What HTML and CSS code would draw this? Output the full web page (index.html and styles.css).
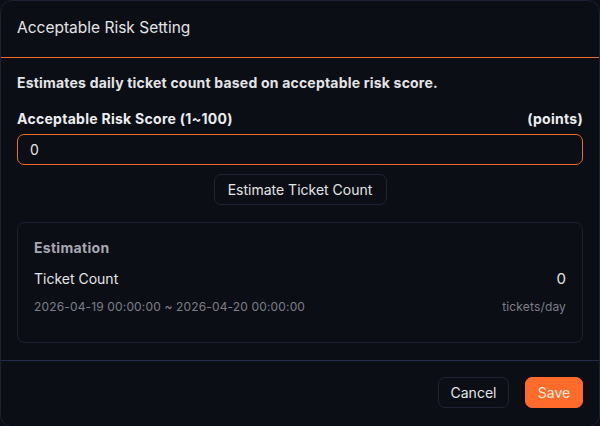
FILE: index.html
```html
<!DOCTYPE html>
<html>
<head>
<meta charset="utf-8">
<link rel="stylesheet" href="styles.css">
</head>
<body>
<div class="dialog">
  <div class="header">Acceptable Risk Setting</div>
  <div class="body">
    <p class="desc">Estimates daily ticket count based on acceptable risk score.</p>
    <div class="label-row">
      <span>Acceptable Risk Score (1~100)</span>
      <span>(points)</span>
    </div>
    <div class="input">0</div>
    <div class="center">
      <button class="btn">Estimate Ticket Count</button>
    </div>
    <div class="card">
      <div class="card-title">Estimation</div>
      <div class="row main-row">
        <span>Ticket Count</span>
        <span class="value">0</span>
      </div>
      <div class="row sub-row">
        <span>2026-04-19 00:00:00 ~ 2026-04-20 00:00:00</span>
        <span>tickets/day</span>
      </div>
    </div>
  </div>
  <div class="footer">
    <button class="btn cancel">Cancel</button>
    <button class="btn save">Save</button>
  </div>
</div>
</body>
</html>
```

FILE: styles.css
```css
html, body {
  margin: 0;
  padding: 0;
  background: #0b0e15;
  width: 600px;
  height: 426px;
  overflow: hidden;
}
body {
  font-family: Inter, "Noto Sans", sans-serif;
  color: #e4e4e7;
}
.dialog {
  box-sizing: border-box;
  width: 600px;
  height: 427px;
  background: #0b0e15;
  border: 1px solid #1c2133;
  border-radius: 12px;
  display: flex;
  flex-direction: column;
}
.header {
  font-size: 15.5px;
  line-height: 22px;
  padding: 16px 16px 18px 16px;
  border-bottom: 1px solid #f26a2a;
  color: #e4e4e7;
}
.body {
  padding: 15px 16px 17px 16px;
  border-bottom: 1px solid #232a4d;
}
.desc {
  margin: 0;
  font-size: 14px;
  font-weight: 700;
  line-height: 20px;
  letter-spacing: 0.2px;
  color: #e4e4e7;
}
.label-row {
  margin-top: 16px;
  display: flex;
  justify-content: space-between;
  font-size: 14px;
  font-weight: 700;
  line-height: 20px;
  letter-spacing: 0.28px;
  color: #ececef;
}
.input {
  margin-top: 5px;
  box-sizing: border-box;
  height: 31px;
  border: 1px solid #f26a2a;
  border-radius: 7px;
  padding: 0 12px;
  font-size: 14px;
  line-height: 29px;
  color: #e4e4e7;
}
.center {
  margin-top: 9px;
  display: flex;
  justify-content: center;
}
.btn {
  font-family: Inter, "Noto Sans", sans-serif;
  box-sizing: border-box;
  height: 31px;
  background: #0b0e15;
  border: 1px solid #1e2434;
  border-radius: 7px;
  color: #e4e4e7;
  font-size: 14px;
  padding: 0 12px;
}
.center .btn {
  width: 173px;
  padding: 0;
}
.card {
  margin-top: 17px;
  box-sizing: border-box;
  height: 121px;
  border: 1px solid #1c2133;
  border-radius: 8px;
  padding: 15px 16px;
}
.card-title {
  font-size: 14px;
  font-weight: 700;
  line-height: 20px;
  letter-spacing: 0.3px;
  color: #a8a8b0;
}
.row {
  display: flex;
  justify-content: space-between;
}
.main-row {
  margin-top: 11px;
  font-size: 14px;
  line-height: 20px;
  color: #e4e4e7;
}
.main-row .value {
  font-size: 15px;
}
.sub-row {
  margin-top: 10px;
  font-size: 12px;
  line-height: 16px;
  letter-spacing: 0.15px;
  color: #7c7f88;
}
.footer {
  display: flex;
  justify-content: flex-end;
  gap: 16px;
  padding: 16px 16px 0 16px;
}
.cancel {
  width: 71px;
  padding: 0;
}
.save {
  width: 58px;
  padding: 0;
  background: #ff6b2b;
  border-color: #ff6b2b;
  color: #ffe9dd;
}
```
